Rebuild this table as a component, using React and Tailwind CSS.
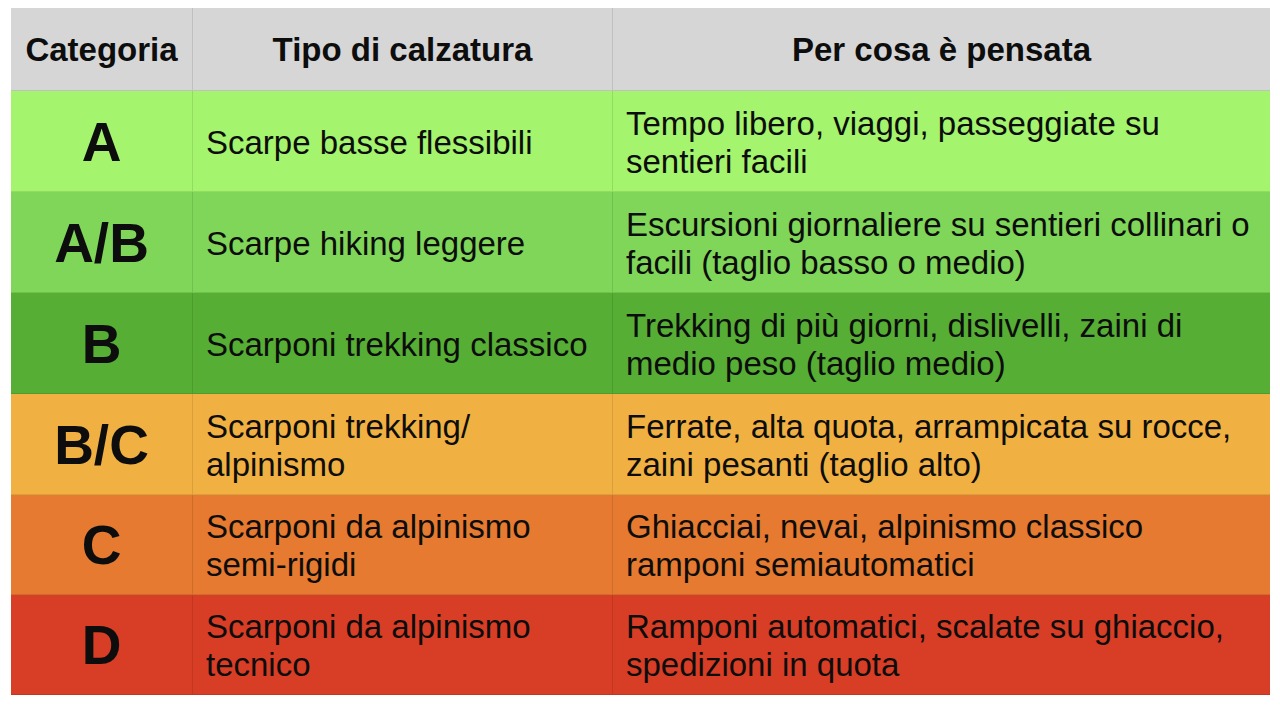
const rows = [
  { cat: "A", tipo: ["Scarpe basse flessibili"], uso: ["Tempo libero, viaggi, passeggiate su", "sentieri facili"], bg: "bg-[#a4f46d]" },
  { cat: "A/B", tipo: ["Scarpe hiking leggere"], uso: ["Escursioni giornaliere su sentieri collinari o", "facili (taglio basso o medio)"], bg: "bg-[#7fd659]" },
  { cat: "B", tipo: ["Scarponi trekking classico"], uso: ["Trekking di più giorni, dislivelli, zaini di", "medio peso (taglio medio)"], bg: "bg-[#56ae35]" },
  { cat: "B/C", tipo: ["Scarponi trekking/", "alpinismo"], uso: ["Ferrate, alta quota, arrampicata su rocce,", "zaini pesanti (taglio alto)"], bg: "bg-[#f1b142]" },
  { cat: "C", tipo: ["Scarponi da alpinismo", "semi-rigidi"], uso: ["Ghiacciai, nevai, alpinismo classico", "ramponi semiautomatici"], bg: "bg-[#e57a30]" },
  { cat: "D", tipo: ["Scarponi da alpinismo", "tecnico"], uso: ["Ramponi automatici, scalate su ghiaccio,", "spedizioni in quota"], bg: "bg-[#d83d26]" },
];

const Lines = ({ lines }) => (
  <div>
    {lines.map((l) => (
      <div key={l}>{l}</div>
    ))}
  </div>
);

export default function App() {
  return (
    <div className="w-[1280px] h-[707px] bg-white pt-[8px] pl-[11px] text-[#0d0d0d] font-['Liberation_Sans',Arial,sans-serif]">
      <div className="grid grid-cols-[182px_420px_657px] grid-rows-[83px_101px_101px_101px_101px_100px_100px] w-[1259px]">
        {/* Header */}
        <div className="bg-[#d6d6d6] border-r border-b border-black/10 flex items-center justify-center font-bold text-[33px] pt-[2px]">
          Categoria
        </div>
        <div className="bg-[#d6d6d6] border-r border-b border-black/10 flex items-center justify-center font-bold text-[33px] pt-[2px]">
          Tipo di calzatura
        </div>
        <div className="bg-[#d6d6d6] border-b border-black/10 flex items-center justify-center font-bold text-[33px] pt-[2px]">
          Per cosa è pensata
        </div>

        {rows.map((r) => (
          <div key={r.cat} className="contents">
            <div className={`${r.bg} border-r border-b border-black/10 flex items-center justify-center font-bold text-[55px] pt-[2px]`}>
              {r.cat}
            </div>
            <div className={`${r.bg} border-r border-b border-black/10 flex items-center pl-[13px] pt-[3px] text-[33px] leading-[38px]`}>
              <Lines lines={r.tipo} />
            </div>
            <div className={`${r.bg} border-b border-black/10 flex items-center pl-[13px] pt-[3px] text-[33px] leading-[38px]`}>
              <Lines lines={r.uso} />
            </div>
          </div>
        ))}
      </div>
    </div>
  );
}
